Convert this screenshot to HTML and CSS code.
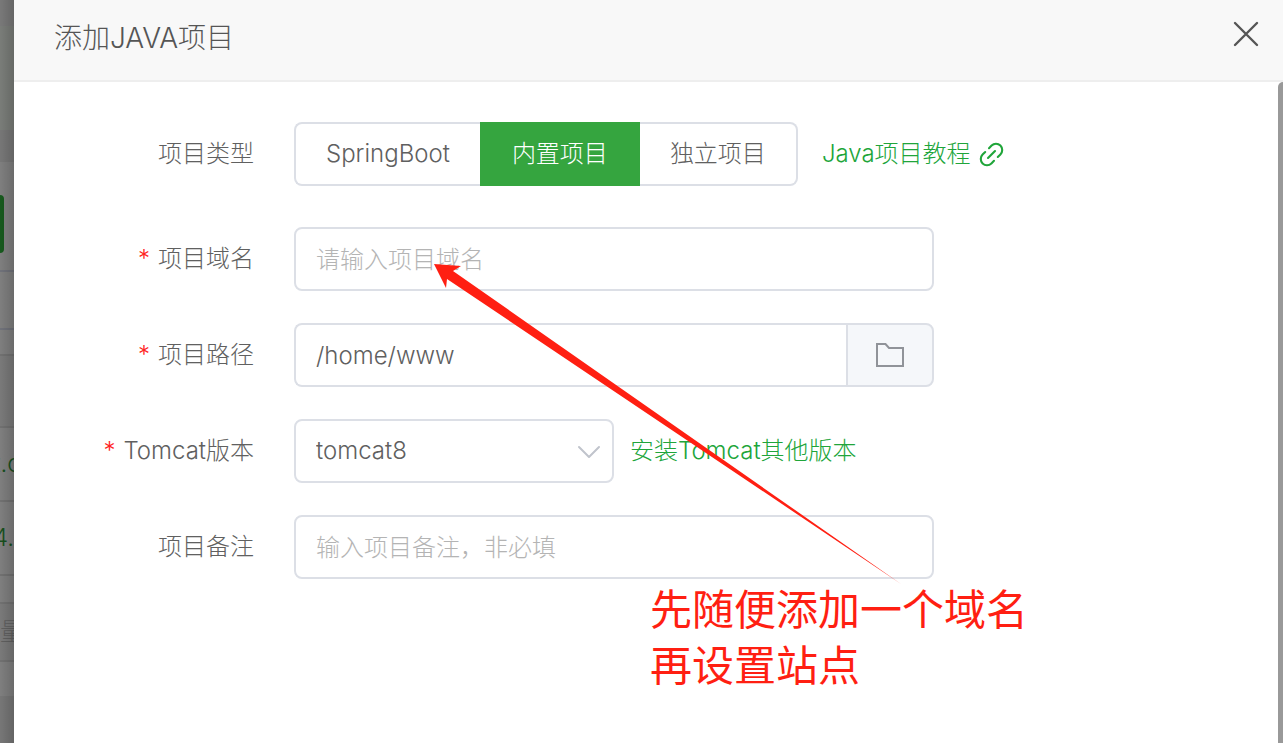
FILE: index.html
```html
<!DOCTYPE html>
<html lang="zh-CN">
<head>
<meta charset="utf-8">
<title>添加JAVA项目</title>
<link rel="stylesheet" href="styles.css">
</head>
<body>
<div class="screen">
  <div class="backdrop" aria-hidden="true">
    <div class="strip strip-top"></div>
    <div class="strip strip-notice"></div>
    <div class="strip strip-gap"></div>
    <div class="strip strip-toolbar"><span class="page-button"></span></div>
    <div class="strip strip-tabs"></div>
    <div class="strip strip-space"></div>
    <div class="strip strip-head"></div>
    <div class="strip strip-row strip-domain">t.c</div>
    <div class="strip strip-row">4.</div>
    <div class="strip strip-space strip-space-last"></div>
    <div class="strip strip-foot">量</div>
    <div class="strip strip-end"></div>
  </div>
  <main class="dialog" role="dialog" aria-labelledby="dialog-title">
    <header class="dialog-header">
      <h1 class="dialog-title" id="dialog-title">添加JAVA项目</h1>
      <button class="close" type="button" aria-label="关闭">
        <svg width="26" height="26" viewBox="0 0 26 26"><path d="M2 2 24 24M24 2 2 24" fill="none" stroke="#555" stroke-width="2.4" stroke-linecap="round"/></svg>
      </button>
    </header>
    <div class="dialog-body">
      <form class="form">
        <div class="row row-type">
          <span class="label" id="type-label">项目类型</span>
          <div class="segments" role="group" aria-labelledby="type-label">
            <button class="segment" type="button">SpringBoot</button>
            <button class="segment active" type="button" aria-pressed="true">内置项目</button>
            <button class="segment" type="button">独立项目</button>
          </div>
          <a class="link link-guide" href="#">Java项目教程
            <svg class="link-icon" width="25" height="25" viewBox="0 0 25 25" fill="none" stroke="currentColor" stroke-width="2.1" stroke-linecap="round"><path d="M10 6.200 12.600 3.600A6.200 6.200 0 0 1 21.400 12.400L18.800 15"/><path d="M15 18.800 12.400 21.400A6.200 6.200 0 0 1 3.600 12.600L6.200 10"/><path d="M9 16 16 9"/></svg>
          </a>
        </div>
        <div class="row">
          <label class="label required" for="domain">项目域名</label>
          <input class="field" id="domain" type="text" placeholder="请输入项目域名">
        </div>
        <div class="row">
          <label class="label required" for="path">项目路径</label>
          <div class="field-group">
            <input class="field field-joined" id="path" type="text" value="/home/www">
            <button class="browse" type="button" aria-label="选择目录">
              <svg width="30" height="26" viewBox="0 0 30 26"><path d="M2 2H10.500L14 6H28V24H2Z" fill="none" stroke="#909399" stroke-width="2"/></svg>
            </button>
          </div>
        </div>
        <div class="row">
          <label class="label required" for="version">Tomcat版本</label>
          <div class="select-wrap">
            <select class="field select" id="version"><option>tomcat8</option></select>
            <svg class="chevron" width="24" height="14" viewBox="0 0 24 14"><path d="M2 2 12 12 22 2" fill="none" stroke="#c0c4cc" stroke-width="2" stroke-linecap="round" stroke-linejoin="round"/></svg>
          </div>
          <a class="link link-install" href="#">安装Tomcat其他版本</a>
        </div>
        <div class="row">
          <label class="label" for="note">项目备注</label>
          <input class="field" id="note" type="text" placeholder="输入项目备注，非必填">
        </div>
      </form>
      <span class="scroll-thumb"></span>
    </div>
  </main>
  <svg class="arrow" width="468" height="320" viewBox="434 264 468 320" aria-hidden="true"><path d="M434 264 461 266 453 271 901 584 447 279 446 288Z" fill="#ff1f12"/></svg>
  <p class="note">先随便添加一个域名<br>再设置站点</p>
</div>
</body>
</html>
```
FILE: styles.css
```css
* { box-sizing: border-box; }

body {
  margin: 0;
  font-family: Inter, "Noto Sans CJK SC", sans-serif;
  font-size: 24px;
  font-weight: 300;
  line-height: 32px;
  color: #606060;
}

button, input, select { font: inherit; color: inherit; }

.screen {
  position: relative;
  display: flex;
  min-height: 100vh;
  overflow: hidden;
}

/* dimmed page behind the dialog */
.backdrop {
  position: relative;
  display: flex;
  flex-direction: column;
  flex: 0 0 14px;
  width: 14px;
  overflow: hidden;
  background: #7f7f7f;
}
.backdrop::after {
  content: "";
  position: absolute;
  inset: 0;
  background: linear-gradient(to right, rgba(0, 0, 0, 0), rgba(0, 0, 0, 0.16));
}
.strip { border-bottom: 2px solid #717171; white-space: nowrap; }
.strip-top { height: 26px; background: #797979; border: 0; }
.strip-notice { height: 104px; background: #7a7d79; border: 0; }
.strip-gap { height: 32px; background: #777; border: 0; }
.strip-toolbar { height: 110px; padding-top: 33px; border-color: #70727a; }
.page-button {
  display: block;
  width: 4px;
  height: 58px;
  border-radius: 0 6px 6px 0;
  background: #17591d;
}
.strip-tabs { height: 58px; border-color: #70727a; }
.strip-space { height: 26px; }
.strip-space-last { height: 28px; }
.strip-head { height: 72px; background: #7a7a7a; }
.strip-row {
  display: flex;
  justify-content: flex-end;
  align-items: center;
  height: 74px;
  color: #174f1d;
}
.strip-domain { justify-content: center; }
.strip-foot { height: 58px; padding-top: 12px; background: #7a7a7a; color: #606060; }
.strip-end { flex: 1; background: linear-gradient(#7f7f7f 34px, #777 34px); border: 0; }

.dialog {
  display: flex;
  flex-direction: column;
  flex: 1;
  min-width: 0;
  background: #fff;
}
.dialog-header {
  display: flex;
  justify-content: space-between;
  align-items: center;
  padding: 0 24px 12px 40px;
  min-height: 82px;
  background: #f8f8f8;
  border-bottom: 2px solid #eee;
}
.dialog-title {
  margin: 0;
  padding-top: 8px;
  font-size: 28px;
  font-weight: 300;
  line-height: 40px;
  color: #555;
}
.close {
  display: flex;
  padding: 0;
  border: 0;
  background: none;
}
.dialog-body { position: relative; flex: 1; }
.scroll-thumb {
  position: absolute;
  top: 0;
  right: 0;
  bottom: 0;
  width: 5px;
  border-radius: 6px 0 0 0;
  background: #999;
}

.form { padding: 40px; }
.row { display: flex; align-items: center; margin-bottom: 32px; }
.row-type { margin-bottom: 41px; }
.label {
  flex: 0 0 200px;
  margin-right: 40px;
  text-align: right;
}
.required::before { content: "*"; margin-right: 8px; color: #f22; }

.segments { display: flex; }
.segment {
  height: 64px;
  padding: 0 30px;
  border: 2px solid #dcdfe6;
  border-width: 2px 0;
  background: #fff;
}
.segment:first-child { border-left-width: 2px; border-radius: 8px 0 0 8px; }
.segment:last-child { border-right-width: 2px; border-radius: 0 8px 8px 0; }
.active {
  padding: 0 32px;
  border-color: #35a53f;
  background: #35a53f;
  color: #fff;
}

.link { color: #20a53a; text-decoration: none; }
.link-guide { display: flex; align-items: center; gap: 8px; margin-left: 24px; }
.link-install { margin-left: 16px; }

.field {
  flex: 0 1 640px;
  width: 100%;
  min-width: 0;
  height: 64px;
  padding: 0 20px;
  border: 2px solid #dcdfe6;
  border-radius: 8px;
  background: #fff;
}
.field::placeholder { color: #b4b4b4; opacity: 1; }
.field-group { display: flex; flex: 0 1 640px; }
.field-joined { flex: 1; border-radius: 8px 0 0 8px; border-right: 0; }
.browse {
  display: flex;
  align-items: center;
  justify-content: center;
  width: 88px;
  border: 2px solid #dcdfe6;
  border-radius: 0 8px 8px 0;
  background: #f5f7fa;
}
.select-wrap { position: relative; flex: 0 1 320px; }
.select { display: block; appearance: none; }
.chevron { position: absolute; top: 26px; right: 13px; pointer-events: none; }

/* annotation drawn over the dialog */
.arrow { position: absolute; left: 434px; top: 264px; pointer-events: none; }
.note {
  position: absolute;
  left: 650px;
  top: 582px;
  margin: 0;
  font-size: 42px;
  font-weight: 400;
  line-height: 56px;
  color: #ff1f12;
}
```
